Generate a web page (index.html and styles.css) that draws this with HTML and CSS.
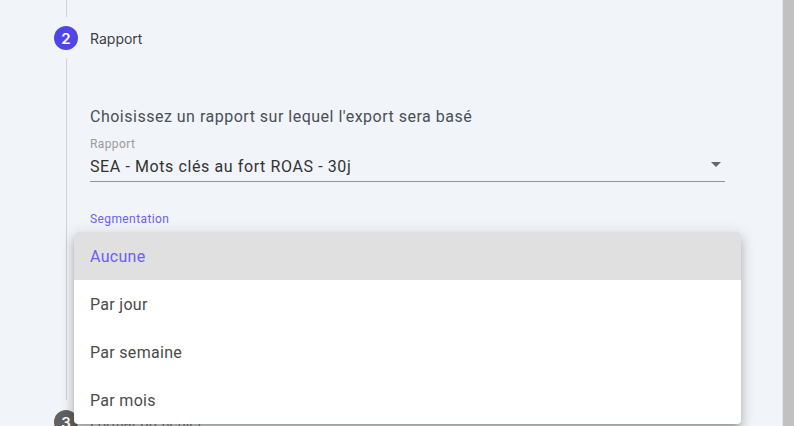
FILE: index.html
```html
<!DOCTYPE html>
<html lang="fr">
<head>
<meta charset="utf-8">
<title>Export</title>
<link rel="stylesheet" href="styles.css">
</head>
<body>
<div class="page">
  <main class="main">
    <div class="line-top"></div>
    <div class="step-header">
      <span class="step-num active">2</span>
      <span class="step-title">Rapport</span>
    </div>
    <div class="step-content">
      <p class="intro">Choisissez un rapport sur lequel l'export sera basé</p>
      <div class="field">
        <div class="field-label">Rapport</div>
        <div class="field-input">
          <span class="field-value">SEA - Mots clés au fort ROAS - 30j</span>
          <span class="arrow"></span>
        </div>
      </div>
      <div class="field seg">
        <div class="field-label focus">Segmentation</div>
        <div class="field-input focused">
          <span class="field-value"></span>
          <span class="arrow"></span>
        </div>
        <ul class="menu">
          <li class="menu-item selected">Aucune</li>
          <li class="menu-item">Par jour</li>
          <li class="menu-item">Par semaine</li>
          <li class="menu-item">Par mois</li>
        </ul>
      </div>
    </div>
    <div class="step-header">
      <span class="step-num">3</span>
      <span class="step-title muted">Format du fichier</span>
    </div>
  </main>
  <div class="scrollbar"></div>
</div>
</body>
</html>
```

FILE: styles.css
```css
* { box-sizing: border-box; }
html, body { margin: 0; padding: 0; height: 100%; overflow: hidden; }
body {
  background: #f1f4f9;
  font-family: Roboto, "Liberation Sans", sans-serif;
}
.page {
  display: flex;
  height: 426px;
  overflow: hidden;
}
.main {
  flex: 1;
  padding: 0 57px 0 54px;
  border-right: 1px solid #e4e7ec;
}
.scrollbar {
  width: 11px;
  background: #c1c1c1;
}
.line-top {
  margin-left: 12px;
  height: 17px;
  border-left: 1px solid #cfd2d6;
  margin-bottom: 9px;
}
.step-header {
  display: flex;
  align-items: center;
  gap: 12px;
  height: 24px;
}
.step-num {
  width: 24px;
  height: 24px;
  border-radius: 50%;
  background: #616161;
  color: #fff;
  font-family: Inter, Roboto, sans-serif;
  font-weight: 600;
  font-size: 15px;
  display: flex;
  align-items: center;
  justify-content: center;
}
.step-num.active { background: #4f46e5; }
.step-title {
  font-family: Inter, Roboto, sans-serif;
  font-size: 14px;
  color: #3c3f44;
  padding-top: 1px;
}
.step-title.muted { color: #8a8a8a; }
.step-content {
  margin: 8px 0 10px 12px;
  border-left: 1px solid #cfd2d6;
  padding: 47px 0 0 23px;
  height: 342px;
}
.intro {
  margin: 0 0 7px;
  font-size: 16px;
  line-height: 24px;
  letter-spacing: 0.5px;
  color: #4a4f57;
}
.field { position: relative; }
.field-label {
  font-size: 12px;
  line-height: 16px;
  letter-spacing: 0.4px;
  color: #9a9a9a;
  margin-bottom: 3px;
}
.field-label.focus { color: #6a60f0; }
.field-input {
  display: flex;
  align-items: center;
  justify-content: space-between;
  height: 27px;
  padding-bottom: 2px;
  border-bottom: 1px solid #949494;
}
.field-input.focused { border-bottom: 2px solid #4f46e5; }
.field-value {
  font-size: 16px;
  line-height: 24px;
  letter-spacing: 0.6px;
  color: #333;
}
.arrow {
  width: 0;
  height: 0;
  border-left: 5px solid transparent;
  border-right: 5px solid transparent;
  border-top: 5px solid #666;
  margin-right: 4px;
  margin-top: -5px;
}
.seg { margin-top: 29px; }
.menu {
  position: absolute;
  left: -16px;
  right: -16px;
  top: 21px;
  margin: 0;
  padding: 0;
  list-style: none;
  background: #fff;
  border-radius: 4px;
  overflow: hidden;
  box-shadow: 0 5px 5px -3px rgba(0,0,0,.2), 0 8px 10px 1px rgba(0,0,0,.14), 0 3px 14px 2px rgba(0,0,0,.12);
}
.menu-item {
  height: 48px;
  padding: 0 16px;
  display: flex;
  align-items: center;
  font-size: 16px;
  letter-spacing: 0.3px;
  color: #4a4a4a;
}
.menu-item.selected {
  background: #e0e0e0;
  color: #6a60f0;
}
```
